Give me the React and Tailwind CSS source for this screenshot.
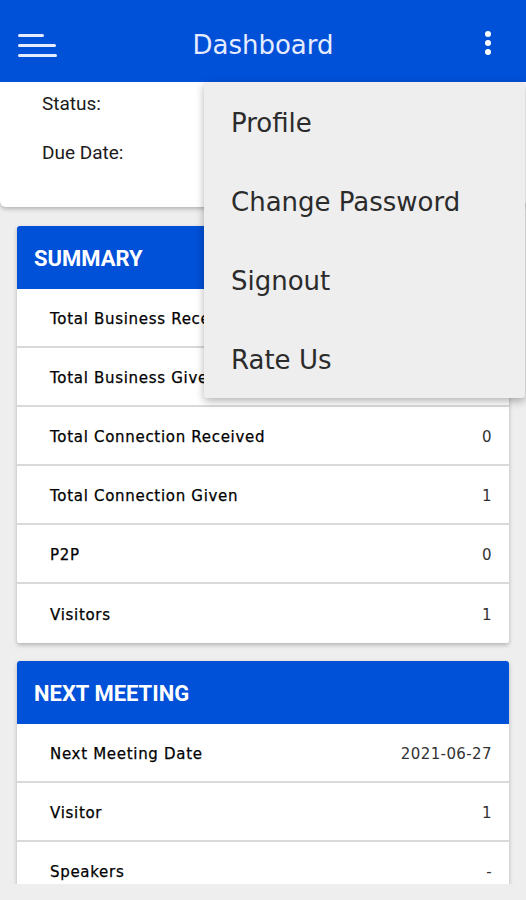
import React from 'react';

const summary = [
  ['Total Business Received', '0'],
  ['Total Business Given', '0'],
  ['Total Connection Received', '0'],
  ['Total Connection Given', '1'],
  ['P2P', '0'],
  ['Visitors', '1'],
];

const meeting = [
  ['Next Meeting Date', '2021-06-27'],
  ['Visitor', '1'],
  ['Speakers', '-'],
];

const menuItems = ['Profile', 'Change Password', 'Signout', 'Rate Us'];

function Row({ label, value, last }) {
  return (
    <div
      className={`flex items-center justify-between h-[59px] pt-[3px] pl-[33px] pr-[17px] bg-white ${
        last ? '' : 'border-b-2 border-[#d9d9d9]'
      }`}
    >
      <span className="text-[15px] tracking-[0.7px] text-black font-['DejaVu_Sans',sans-serif] [-webkit-text-stroke:0.25px_black]">{label}</span>
      <span className="text-[15px] tracking-[0.4px] text-[#333] font-['DejaVu_Sans',sans-serif]">{value}</span>
    </div>
  );
}

function Card({ title, rows, cut }) {
  return (
    <div className="mx-[17px] rounded-[3px] overflow-hidden bg-white shadow-[0_2px_4px_rgba(0,0,0,0.25)]">
      <div className="h-[63px] pt-[2px] bg-[#0050d8] flex items-center pl-[17px]">
        <span className="text-white text-[22px] font-bold font-['Roboto',sans-serif]">{title}</span>
      </div>
      {rows.map(([l, v], i) => (
        <Row key={l} label={l} value={v} last={i === rows.length - 1 && !cut} />
      ))}
    </div>
  );
}

export default function App() {
  return (
    <div className="relative w-[526px] h-[900px] overflow-hidden bg-[#eeeeee]">
      {/* App bar */}
      <div className="h-[82px] pt-[9px] bg-[#0050d8] flex items-center relative z-10">
        <div className="flex flex-col gap-[7px] w-[58px] pl-[18px]">
          <div className="h-[3px] w-[26px] bg-[#e6ecff] rounded-full" />
          <div className="h-[3px] w-[38px] bg-[#e6ecff] rounded-full" />
          <div className="h-[3px] w-[39px] bg-[#e6ecff] rounded-full" />
        </div>
        <span className="flex-1 text-center text-[#e6ecff] text-[26px] font-['DejaVu_Sans',sans-serif]">Dashboard</span>
        <div className="flex flex-col items-end gap-[3px] w-[58px] pr-[35px] -mt-[6px]">
          <div className="w-[6px] h-[6px] rounded-full bg-white" />
          <div className="w-[6px] h-[6px] rounded-full bg-white" />
          <div className="w-[6px] h-[6px] rounded-full bg-white" />
        </div>
      </div>

      {/* Member info card */}
      <div className="h-[127px] -mt-[2px] bg-white rounded-b-[6px] shadow-[0_2px_4px_rgba(0,0,0,0.25)] pl-[42px] pt-[11px] font-['Roboto',sans-serif] text-[19px] text-[#1b1b1b]">
        <div className="h-[26px] leading-[26px]">Status:</div>
        <div className="mt-[23px] h-[26px] leading-[26px]">Due Date:</div>
      </div>

      <div className="mt-[19px] flex flex-col gap-[18px]">
        <Card title="SUMMARY" rows={summary} />
        <Card title="NEXT MEETING" rows={meeting} cut />
      </div>

      {/* Overflow menu */}
      <div className="absolute top-[82px] left-[204px] w-[321px] h-[316px] z-20 bg-[#eeeeee] rounded-[3px] shadow-[0_3px_8px_rgba(0,0,0,0.3)] pt-[2px]">
        {menuItems.map((m) => (
          <div
            key={m}
            className="h-[79px] flex items-center pl-[27px] text-[26px] text-[#2b2b2b] font-['DejaVu_Sans',sans-serif]"
          >
            {m}
          </div>
        ))}
      </div>

      <div className="absolute left-0 right-0 top-[884px] h-[16px] bg-[#eeeeee] z-10" />
    </div>
  );
}
